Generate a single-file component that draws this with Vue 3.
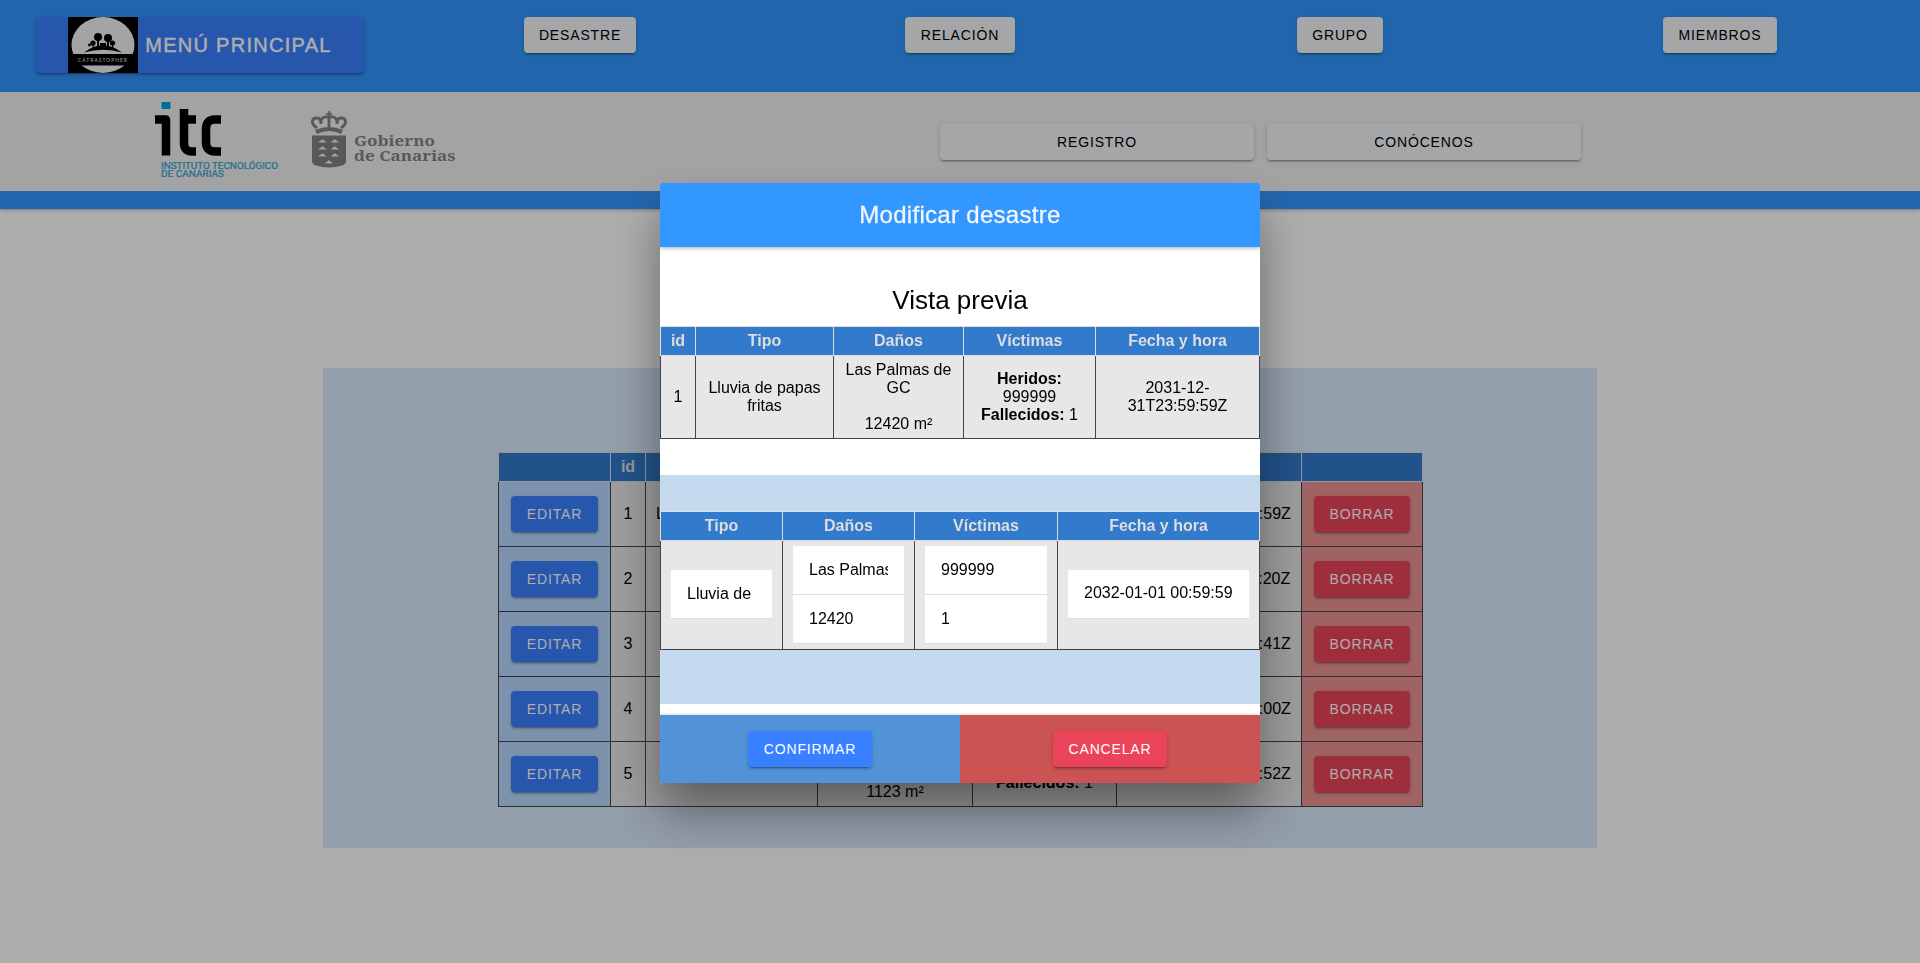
<script setup>
import { ref } from 'vue'

const sections = ['Desastre', 'Relación', 'Grupo', 'Miembros']

const disasters = [
  { id: 1, type: 'Lluvia de papas fritas', place: 'Las Palmas de GC', area: '12420 m²', injured: 999999, dead: 1, date: '2031-12-31T23:59:59Z' },
  { id: 2, type: 'Incendio', place: 'Telde', area: '300 m²', injured: 2, dead: 1, date: '2021-05-11T10:32:20Z' },
  { id: 3, type: 'Terremoto', place: 'Arucas', area: '820 m²', injured: 4, dead: 1, date: '2021-05-12T09:15:41Z' },
  { id: 4, type: 'Volcán', place: 'La Palma', area: '5400 m²', injured: 3, dead: 1, date: '2021-05-13T12:00:00Z' },
  { id: 5, type: 'Tsunami', place: 'Gáldar', area: '1123 m²', injured: 1, dead: 1, date: '2021-05-14T08:21:52Z' },
]
const selected = disasters[0]

const form = ref({
  type: 'Lluvia de papas fritas',
  place: 'Las Palmas de GC',
  area: '12420',
  injured: '999999',
  dead: '1',
  date: '2032-01-01 00:59:59',
})
</script>

<template>
  <div class="page">
    <header class="header">
      <nav class="topbar">
        <div class="cell">
          <button class="btn primary home">
            <svg class="badge" viewBox="0 0 70 56">
              <rect width="70" height="56" fill="#000" />
              <clipPath id="disc"><ellipse cx="35" cy="28" rx="31.500" ry="28" /></clipPath>
              <g clip-path="url(#disc)">
                <rect width="70" height="37" fill="#f2f2f2" />
                <rect y="48.500" width="70" height="8" fill="#f2f2f2" />
              </g>
              <path d="M16 35.500Q35 21 54 35.500Q35 30 16 35.500Z" />
              <circle cx="30" cy="20" r="4" />
              <circle cx="40" cy="21" r="4" />
              <circle cx="25" cy="26" r="2.600" />
              <circle cx="44.500" cy="26" r="2.600" />
              <circle cx="21.500" cy="28" r="1.400" />
              <path d="M29 22h2v7h-2zM39 23h2v6h-2zM24.500 27h1.200v4h-1.200zM44 27h1.200v4H44zM32 26h6v4h-6z" />
              <text x="35" y="45.300" text-anchor="middle" font-size="6.200" textLength="50" lengthAdjust="spacingAndGlyphs" fill="#ddd" font-family="Lato, sans-serif">CATRASTOPHER</text>
            </svg>
            <span>Menú principal</span>
          </button>
        </div>
        <div v-for="name in sections" :key="name" class="cell">
          <button class="btn light">{{ name }}</button>
        </div>
      </nav>

      <div class="brandbar">
        <div class="logos">
          <svg class="itc" viewBox="0 0 125 76">
            <rect x="6.500" y="0" width="9" height="7" fill="#00a5e0" />
            <path d="M0 17.500H11V53.500" fill="none" stroke="#000" stroke-width="8.500" stroke-linejoin="round" />
            <path d="M29 7V41Q29 49.500 37 49.500H41M29 17.500H41" fill="none" stroke="#000" stroke-width="8.500" />
            <path d="M66 17.500H60Q51 17.500 51 27V40Q51 49.500 60 49.500H66" fill="none" stroke="#000" stroke-width="8.500" />
            <g fill="#2fa3d2" stroke="#2fa3d2" stroke-width=".2" font-family="Roboto, sans-serif" font-size="8.800">
              <text x="6" y="66.500" textLength="117" lengthAdjust="spacingAndGlyphs">INSTITUTO TECNOLÓGICO</text>
              <text x="6" y="75" textLength="63" lengthAdjust="spacingAndGlyphs">DE CANARIAS</text>
            </g>
          </svg>
          <svg class="gob" viewBox="0 0 145 57">
            <g fill="none" stroke="#848484">
              <path d="M18 0V6M15 2.800H21" stroke-width="1.800" />
              <path d="M6 17C-1 12 1 7 6 7Q10 7 10 13M30 17C37 12 35 7 30 7Q26 7 26 13M10 13C9 5 17.500 4 18 8C18.500 4 27 5 26 13M18 7V16" stroke-width="2.900" />
              <path d="M5 21Q18 15 31 21" stroke-width="4.200" />
            </g>
            <path d="M1 24.500H35V50Q35 53 31 54.500Q18 58.500 5 54.500Q1 53 1 50Z" fill="#828282" />
            <path d="M7 31.500l4.300-3.300 4.300 3.300zM19.500 31.500l4.300-3.300 4.300 3.300zM7 38.500l4.300-3.300 4.300 3.300zM19.500 38.500l4.300-3.300 4.300 3.300zM7 45.500l4.300-3.300 4.300 3.300zM19.500 45.500l4.300-3.300 4.300 3.300zM13.500 52.500l4.300-3.300 4.300 3.300z" fill="#f0f0f0" />
            <g fill="#848484" font-family="'Noto Serif', 'DejaVu Serif', serif" font-size="14.800" font-weight="bold">
              <text x="43" y="35" textLength="81" lengthAdjust="spacingAndGlyphs">Gobierno</text>
              <text x="43" y="49.500" textLength="101.500" lengthAdjust="spacingAndGlyphs">de Canarias</text>
            </g>
          </svg>
        </div>
        <div class="actions">
          <button class="btn light wide">Registro</button>
          <button class="btn light wide">Conócenos</button>
        </div>
      </div>
      <div class="stripe"></div>
    </header>

    <main class="panel">
      <table class="grid list">
        <colgroup>
          <col class="l1" /><col class="l2" /><col class="l3" /><col class="l4" /><col class="l5" /><col class="l6" /><col class="l7" />
        </colgroup>
        <thead>
          <tr><th></th><th>id</th><th>Tipo</th><th>Daños</th><th>Víctimas</th><th>Fecha y hora</th><th></th></tr>
        </thead>
        <tbody>
          <tr v-for="d in disasters" :key="d.id">
            <td class="edit"><button class="btn primary">Editar</button></td>
            <td>{{ d.id }}</td>
            <td>{{ d.type }}</td>
            <td>{{ d.place }}<br /><br />{{ d.area }}</td>
            <td><b>Heridos:</b> {{ d.injured }}<br /><b>Fallecidos:</b> {{ d.dead }}</td>
            <td>{{ d.date }}</td>
            <td class="remove"><button class="btn danger">Borrar</button></td>
          </tr>
        </tbody>
      </table>
    </main>

    <div class="backdrop">
      <section class="modal">
        <h1 class="modal-title">Modificar desastre</h1>
        <div class="modal-body">
          <h2>Vista previa</h2>
          <table class="grid preview">
            <colgroup><col class="p1" /><col class="p2" /><col class="p3" /><col class="p4" /><col class="p5" /></colgroup>
            <thead>
              <tr><th>id</th><th>Tipo</th><th>Daños</th><th>Víctimas</th><th>Fecha y hora</th></tr>
            </thead>
            <tbody>
              <tr>
                <td>{{ selected.id }}</td>
                <td>{{ selected.type }}</td>
                <td>{{ selected.place }}<br /><br />{{ selected.area }}</td>
                <td><b>Heridos:</b> {{ selected.injured }}<br /><b>Fallecidos:</b> {{ selected.dead }}</td>
                <td>{{ selected.date }}</td>
              </tr>
            </tbody>
          </table>
          <div class="form">
            <table class="grid fields">
              <colgroup><col class="f1" /><col class="f2" /><col class="f3" /><col class="f4" /></colgroup>
              <thead>
                <tr><th>Tipo</th><th>Daños</th><th>Víctimas</th><th>Fecha y hora</th></tr>
              </thead>
              <tbody>
                <tr>
                  <td><label class="item single"><input v-model="form.type" class="short" /></label></td>
                  <td>
                    <label class="item"><input v-model="form.place" /></label>
                    <label class="item"><input v-model="form.area" /></label>
                  </td>
                  <td>
                    <label class="item"><input v-model="form.injured" /></label>
                    <label class="item"><input v-model="form.dead" /></label>
                  </td>
                  <td><div class="item single date">{{ form.date }}</div></td>
                </tr>
              </tbody>
            </table>
          </div>
        </div>
        <footer class="modal-footer">
          <div class="confirm"><button class="btn primary">Confirmar</button></div>
          <div class="cancel"><button class="btn danger">Cancelar</button></div>
        </footer>
      </section>
    </div>
  </div>
</template>

<style>
body {
  overflow: hidden;
}
</style>

<style scoped>
* {
  box-sizing: border-box;
}
.page {
  height: 963px;
  background: #fff;
  color: #000;
  font: 16px/18px "Liberation Sans", Arial, sans-serif;
}
.header {
  height: 209px;
  box-shadow: 0 1px 4px rgba(0, 0, 0, 0.3);
}
.topbar {
  display: grid;
  grid-template-columns: repeat(5, 1fr);
  height: 92px;
  padding: 17px 10px 0;
  background: #3297ff;
}
.cell {
  display: flex;
  justify-content: center;
  align-items: flex-start;
}
.btn {
  display: inline-flex;
  align-items: center;
  justify-content: center;
  height: 36px;
  padding: 0 15.4px;
  border: 0;
  border-radius: 4px;
  font: 500 14px/1 "Liberation Sans", Arial, sans-serif;
  letter-spacing: 0.84px;
  text-transform: uppercase;
  box-shadow: 0 3px 1px -2px rgba(0, 0, 0, 0.2), 0 2px 2px 0 rgba(0, 0, 0, 0.14), 0 1px 5px 0 rgba(0, 0, 0, 0.12);
}
.light {
  background: #f4f5f8;
  color: #000;
}
.primary {
  background: #3880ff;
  color: #fff;
}
.danger {
  background: #eb445a;
  color: #fff;
}
.home {
  width: 330px;
  height: 56px;
  gap: 7px;
  font-size: 20px;
  letter-spacing: 1.28px;
  -webkit-text-stroke: 0.4px #fff;
}
.badge {
  width: 70px;
  height: 56px;
  -webkit-text-stroke: 0;
}
.brandbar {
  display: flex;
  justify-content: space-between;
  height: 99px;
  padding: 10px 339px 0 155px;
  background: #f0f0f0;
}
.logos {
  display: flex;
  align-items: flex-start;
  gap: 31px;
}
.itc {
  width: 125px;
  height: 76px;
}
.gob {
  width: 145px;
  height: 57px;
  margin-top: 9px;
}
.actions {
  display: flex;
  gap: 13px;
  padding-top: 22px;
}
.wide {
  width: 314px;
}
.stripe {
  height: 18px;
  background: #3297ff;
}
.panel {
  width: 1274px;
  height: 480px;
  margin: 159px auto 0;
  padding-top: 84px;
  background: #d8e9fa;
}
.grid {
  border-collapse: collapse;
  table-layout: fixed;
  text-align: center;
}
.grid th {
  height: 29px;
  padding: 0;
  border: 1px solid #ddd;
  background: #327acc;
  color: #ddd;
}
.grid td {
  padding: 5px 10px;
  border: 1px solid #444;
  background: #e7e7e7;
}
.list {
  width: 925px;
  margin-left: 175px;
}
.list tbody tr {
  height: 65px;
}
.list td {
  padding: 5px 4px;
}
.list td.edit {
  background: #b9d8ff;
}
.list td.remove {
  background: #eb9393;
}
.l1 { width: 112px; }
.l2 { width: 35px; }
.l3 { width: 172px; }
.l4 { width: 155px; }
.l5 { width: 144px; }
.l6 { width: 185px; }
.l7 { width: 121px; }
.backdrop {
  position: fixed;
  inset: 0;
  display: flex;
  justify-content: center;
  padding-top: 183px;
  background: rgba(0, 0, 0, 0.32);
}
.modal {
  display: flex;
  flex-direction: column;
  width: 600px;
  height: 600px;
  border-radius: 2px;
  overflow: hidden;
  background: #fff;
  box-shadow: 0 28px 48px rgba(0, 0, 0, 0.4);
}
.modal-title {
  position: relative;
  height: 64px;
  margin: 0;
  background: #3297ff;
  color: #f4f5f8;
  font-size: 24px;
  font-weight: 400;
  letter-spacing: 0.3px;
  line-height: 63px;
  text-align: center;
  -webkit-text-stroke: 0.3px #f4f5f8;
  box-shadow: 0 1px 4px rgba(0, 0, 0, 0.35);
}
.modal-body {
  flex: 1;
}
.modal-body h2 {
  margin: 37px 0 10px;
  font-size: 26px;
  font-weight: 400;
  line-height: 32px;
  text-align: center;
}
.preview,
.fields {
  width: 600px;
}
.preview tbody tr {
  height: 83px;
}
.preview td {
  padding: 5px 8px;
}
.p1 { width: 35px; }
.p2 { width: 138px; }
.p3 { width: 130px; }
.p4 { width: 132px; }
.p5 { width: 164px; }
.form {
  height: 229px;
  margin-top: 36px;
  padding-top: 36px;
  background: #c5daef;
}
.fields tbody tr {
  height: 109px;
}
.fields td {
  padding: 0 10px;
}
.f1 { width: 122px; }
.f2 { width: 132px; }
.f3 { width: 143px; }
.f4 { width: 202px; }
.item {
  display: flex;
  align-items: center;
  height: 49px;
  padding: 0 16px;
  border-bottom: 1px solid #dedede;
  background: #fff;
}
.single {
  margin-bottom: 2px;
}
.item input {
  width: 100%;
  min-width: 0;
  padding: 0;
  border: 0;
  outline: 0;
  background: transparent;
  color: #000;
  font: inherit;
}
.item input.short {
  width: 64px;
}
.date {
  padding-bottom: 2px;
  white-space: nowrap;
}
.modal-footer {
  position: relative;
  display: grid;
  grid-template-columns: 1fr 1fr;
  height: 68px;
  box-shadow: 0 -1px 3px rgba(0, 0, 0, 0.14);
}
.modal-footer > div {
  display: flex;
  align-items: center;
  justify-content: center;
}
.confirm {
  background: #5293d8;
}
.cancel {
  background: #cb5353;
}
</style>
